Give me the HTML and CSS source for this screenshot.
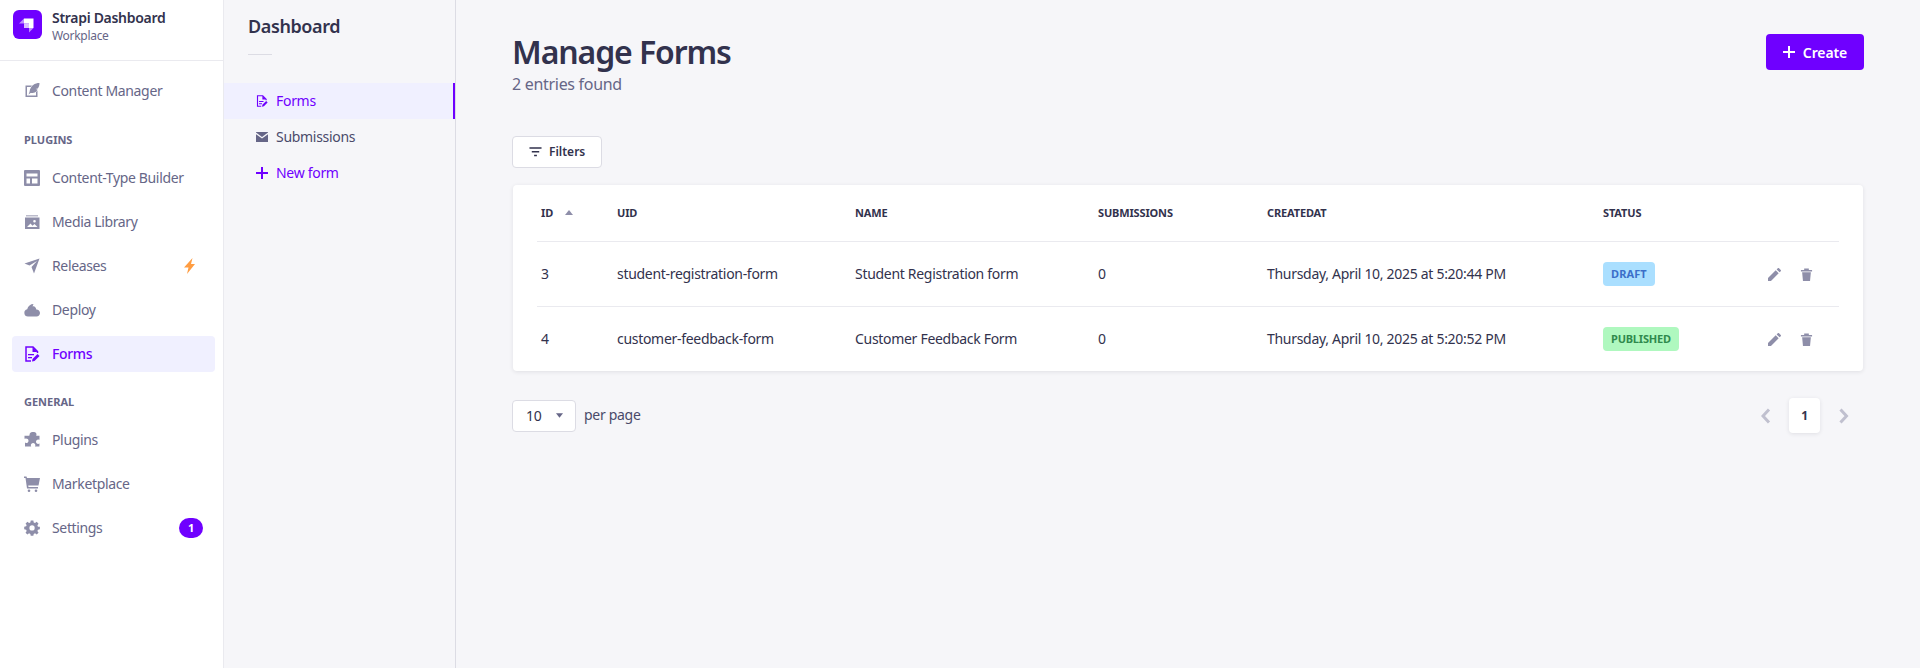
FILE: index.html
```html
<!DOCTYPE html>
<html lang="en">
<head>
<meta charset="utf-8">
<title>Manage Forms</title>
<link rel="stylesheet" href="styles.css">
</head>
<body>
<div class="app">
  <nav class="sidebar">
    <div class="brand">
      <svg class="logo" viewBox="0 0 29 29"><rect width="29" height="29" rx="6" fill="#6f00ff"/><path d="M11 8.500h9.500V18H16v-4.500h-5z" fill="#fff"/><path d="M11 8.500v5H6z" fill="#fff" opacity=".55"/><path d="M16 13.500V18h-5v-4.500z" fill="#fff" opacity=".75"/><path d="M16 18h4.500L16 22.500z" fill="#fff" opacity=".55"/></svg>
      <div class="brand-text">
        <div class="brand-name">Strapi Dashboard</div>
        <div class="brand-sub">Workplace</div>
      </div>
    </div>
    <div class="side-items">
      <a class="side-item"><svg class="ico" viewBox="0 0 16 16"><path d="M2 3.500h6L6.600 5H3v8.500h9V10l1.500-1.500V15H1.500V3.500z"/><path d="M15.500 1C11 1 6.500 3 5.500 10l-1 2.500 2-1.500c3 0 6-.5 7-3.500l-2-.5 2.300-.5C15 5 15.500 3 15.500 1z"/></svg><span>Content Manager</span></a>
      <div class="side-label first">PLUGINS</div>
      <a class="side-item"><svg class="ico" viewBox="0 0 16 16"><path fill-rule="evenodd" d="M0 1A1 1 0 0 1 1 0h14a1 1 0 0 1 1 1v14a1 1 0 0 1-1 1H1a1 1 0 0 1-1-1zM2.500 3.500v3h11v-3zm0 5v5H6v-5zm5.500 0v5h5.500v-5z"/></svg><span>Content-Type Builder</span></a>
      <a class="side-item"><svg class="ico" viewBox="0 0 16 16"><path d="M2 1h12v1.500H2z" opacity=".6"/><path fill-rule="evenodd" d="M1 3.500h14.500V15H1zM10.500 6a1.300 1.300 0 1 0 0 2.600 1.300 1.300 0 0 0 0-2.600zM3 13h10.500l-3-3-2 1.700-2-2.200z"/></svg><span>Media Library</span></a>
      <a class="side-item"><svg class="ico" viewBox="0 0 16 16"><path d="M15.500.5 10 15.500 7.500 9 13 3 5.500 7.500.5 5.500z"/></svg><span>Releases</span><svg class="bolt" viewBox="0 0 12 16"><path d="M9 0 .5 9.500H5L3.500 16l8-10H7.500z" fill="#ff9d42"/></svg></a>
      <a class="side-item"><svg class="ico" viewBox="0 0 16 16"><path d="M4 14.500a3.700 3.700 0 0 1-.8-7.300C4 4 6.500 2 9.500 2l-1 2.500C10 3.500 12 5 12.300 7.500c2.200 0 3.700 1.700 3.700 3.500s-1.500 3.500-3.500 3.500z"/></svg><span>Deploy</span></a>
      <a class="side-item active"><svg class="ico" viewBox="0 0 16 16"><path fill="none" stroke="currentColor" stroke-width="1.500" d="M7 15H2V1h7l4.500 4.500V7"/><path d="M8.500 1v5h5zM4 8h6v1.300H4zM4 11h4v1.300H4zM8 15.500l.5-2.500 5-5 2 2-5 5z"/></svg><span>Forms</span></a>
      <div class="side-label">GENERAL</div>
      <a class="side-item"><svg class="ico" viewBox="0 0 16 16"><path d="M10 0c1.500 0 2.500 1 2.500 2.300L12.200 3.800h3.300v4l-1.300-.4c-1.300 0-2.200 1-2.200 2.300s1 2.200 2.200 2.200l1.300-.3-.1 2.900H11l.4-1.200c0-1.300-1-2.300-2.300-2.300s-2.300 1-2.300 2.300l.4 1.200H1v-4L2 11c1.400.1 2.500-.9 2.500-2.300S3.400 6.400 2 6.400L.5 6.700V3.800h4.800L5.600 2.600C5.600 1 7 0 8.200 0z"/></svg><span>Plugins</span></a>
      <a class="side-item"><svg class="ico" viewBox="0 0 16 16"><path d="M0 .5h2.500L3 2h13l-1.500 7.500H4.200l.3 1.500H14v1.500H3L1.500 2H0z"/><circle cx="5" cy="14.700" r="1.300"/><circle cx="12" cy="14.700" r="1.300"/></svg><span>Marketplace</span></a>
      <a class="side-item"><svg class="ico" viewBox="0 0 16 16"><path fill-rule="evenodd" d="M6.500 0h3l.4 2.200 1.500.6L13.300 1.500l2.100 2.100-1.300 1.900.6 1.500L16.900 7v3l-2.200.4-.6 1.500 1.300 1.900-2.100 2.100-1.900-1.300-1.500.6-.4 2.200h-3l-.4-2.200-1.500-.6-1.900 1.300L.6 13.800l1.300-1.900-.6-1.500L-.9 10V7l2.200-.4.6-1.500L.6 3.600l2.100-2.100 1.900 1.300 1.500-.6zM8 5.500a3 3 0 1 0 0 6 3 3 0 0 0 0-6z" transform="translate(1 .5) scale(.88)"/></svg><span>Settings</span><b class="count">1</b></a>
    </div>
  </nav>

  <aside class="subnav">
    <h2 class="sub-title">Dashboard</h2>
    <div class="sub-rule"></div>
    <div class="sub-items">
      <a class="sub-item current"><svg class="sub-ico" viewBox="0 0 16 16"><path fill="none" stroke="currentColor" stroke-width="1.500" d="M7 15H2V1h7l4.500 4.500V7"/><path d="M8.500 1v5h5zM4 8h6v1.300H4zM4 11h4v1.300H4zM8 15.500l.5-2.500 5-5 2 2-5 5z"/></svg><span>Forms</span></a>
      <a class="sub-item"><svg class="sub-ico" viewBox="0 0 12 12"><path d="M0 1h12v.6L6 6 0 1.600z"/><path d="M0 3.200 6 7.500l6-4.300V11H0z"/></svg><span>Submissions</span></a>
      <a class="sub-item add"><svg class="sub-ico" viewBox="0 0 12 12"><path d="M5 0h2v5h5v2H7v5H5V7H0V5h5z"/></svg><span>New form</span></a>
    </div>
  </aside>

  <main class="content">
    <header class="head">
      <div>
        <h1 class="title">Manage Forms</h1>
        <p class="subtitle">2 entries found</p>
      </div>
      <button class="create"><svg class="create-ico" viewBox="0 0 12 12"><path d="M5 0h2v5h5v2H7v5H5V7H0V5h5z"/></svg>Create</button>
    </header>

    <button class="filters"><svg class="filter-ico" viewBox="0 0 14 12"><path d="M.5 1h13v1.500H.5zM3 5h8v1.500H3zM5.500 9h3v1.500h-3z"/></svg>Filters</button>

    <section class="card">
      <div class="row thead">
        <div class="id-head">ID<svg class="sort" viewBox="0 0 8 5"><path d="M4 0l4 5H0z"/></svg></div>
        <div>UID</div><div>NAME</div><div>SUBMISSIONS</div><div>CREATEDAT</div><div>STATUS</div><div></div>
      </div>
      <div class="row">
        <div>3</div><div>student-registration-form</div><div>Student Registration form</div><div>0</div><div>Thursday, April 10, 2025 at 5:20:44 PM</div>
        <div class="flat"><span class="badge draft">DRAFT</span></div>
        <div class="actions flat"><svg class="act" viewBox="0 0 14 14"><path d="M0 14v-3.200L8.300 2.500l3.200 3.200L3.200 14zM9.300 1.500 10.500.3a1 1 0 0 1 1.400 0l1.800 1.800a1 1 0 0 1 0 1.400l-1.200 1.200z"/></svg><svg class="act" viewBox="0 0 14 14"><path d="M1 2.200h3.500V.5h5v1.700H13v1.500H1zM2.300 4.500h9.400L10.800 14H3.200z"/></svg></div>
      </div>
      <div class="row">
        <div>4</div><div>customer-feedback-form</div><div>Customer Feedback Form</div><div>0</div><div>Thursday, April 10, 2025 at 5:20:52 PM</div>
        <div class="flat"><span class="badge pub">PUBLISHED</span></div>
        <div class="actions flat"><svg class="act" viewBox="0 0 14 14"><path d="M0 14v-3.200L8.300 2.500l3.200 3.200L3.200 14zM9.300 1.500 10.500.3a1 1 0 0 1 1.400 0l1.800 1.800a1 1 0 0 1 0 1.400l-1.200 1.200z"/></svg><svg class="act" viewBox="0 0 14 14"><path d="M1 2.200h3.500V.5h5v1.700H13v1.500H1zM2.300 4.500h9.400L10.800 14H3.200z"/></svg></div>
      </div>
    </section>

    <footer class="foot">
      <div class="per">
        <div class="select"><span>10</span><svg class="caret" viewBox="0 0 8 5"><path d="M0 0h8L4 5z"/></svg></div>
        <span class="per-label">per page</span>
      </div>
      <div class="pager">
        <svg class="chev" viewBox="0 0 10 16"><path d="M8 1.500 2 8l6 6.500" fill="none" stroke="#c0c0cf" stroke-width="3"/></svg>
        <div class="page">1</div>
        <svg class="chev" viewBox="0 0 10 16"><path d="M1.500 1.500 7.500 8l-6 6.500" fill="none" stroke="#c0c0cf" stroke-width="3"/></svg>
      </div>
    </footer>
  </main>
</div>
</body>
</html>
```
FILE: styles.css
```css
* { box-sizing: border-box; }
html, body { margin: 0; height: 100%; }
body { font-family: "Noto Sans", "Open Sans", sans-serif; font-size: 14px; letter-spacing: -.3px; color: #32324d; background: #f6f6f9; overflow: hidden; }
.app { display: flex; height: 668px; }

.sidebar { width: 224px; flex: none; background: #fff; border-right: 1px solid #eaeaef; }
.brand { height: 61px; display: flex; align-items: flex-start; gap: 10px; padding: 10px 0 0 13px; border-bottom: 1px solid #eaeaef; }
.logo { width: 29px; height: 29px; flex: none; }
.brand-text { margin-top: -1px; }
.brand-name { font-size: 14px; line-height: 18px; font-weight: 600; color: #32324d; }
.brand-sub { font-size: 12px; line-height: 18px; color: #666687; }
.side-items { display: flex; flex-direction: column; gap: 8px; padding: 11px 8px 0 12px; }
.side-item { display: flex; align-items: center; height: 36px; padding: 0 12px; border-radius: 4px; color: #666687; }
.side-item span { flex: 1; margin-left: 12px; letter-spacing: -.35px; }
.ico { width: 16px; height: 16px; flex: none; fill: #8e8ea9; }
.side-item.active { background: #f0f0ff; color: #6f00ff; font-weight: 500; }
.side-item.active .ico { fill: #6f00ff; color: #6f00ff; }
.side-label { font-size: 11px; line-height: 16px; font-weight: 700; color: #666687; padding-left: 12px; margin: 14px 0 4px; letter-spacing: 0; }
.side-label.first { margin-top: 15.5px; }
.bolt { width: 13px; height: 16px; margin-right: 7px; }
.count { width: 24px; height: 20px; border-radius: 10px; background: #6f00ff; color: #fff; font-size: 11px; line-height: 20px; text-align: center; }

.subnav { width: 232px; flex: none; background: #f6f6f9; border-right: 1px solid #dcdce4; padding-top: 15px; }
.sub-title { margin: 0 0 0 24px; font-size: 18px; line-height: 22px; font-weight: 600; letter-spacing: -.4px; color: #32324d; }
.sub-rule { width: 24px; height: 1px; background: #dcdce4; margin: 17px 0 28px 24px; }
.sub-items { display: flex; flex-direction: column; }
.sub-item { display: flex; align-items: center; height: 36px; padding-left: 32px; gap: 8px; color: #4a4a6a; }
.sub-item span { padding-bottom: 1px; }
.sub-ico { width: 12px; height: 12px; flex: none; fill: #666687; color: #6f00ff; }
.sub-item.current { background: #f0f0ff; color: #6f00ff; border-right: 2px solid #6f00ff; }
.sub-item.current .sub-ico, .sub-item.add .sub-ico { fill: #6f00ff; }
.sub-item.add { color: #6f00ff; }

.content { flex: 1; padding: 0 56px; min-width: 0; }
.head { display: flex; justify-content: space-between; align-items: flex-start; padding-top: 32px; height: 136px; }
.title { margin: 0; font-size: 32px; line-height: 40px; font-weight: 600; letter-spacing: -1.1px; color: #32324d; }
.subtitle { margin: 0; font-size: 16px; line-height: 24px; letter-spacing: -.3px; color: #666687; }
.create { margin-top: 2px; width: 98px; height: 36px; display: flex; align-items: center; justify-content: center; gap: 8px; border: 0; border-radius: 4px; background: #6f00ff; color: #fff; font: 600 14px "Noto Sans", sans-serif; letter-spacing: -.1px; }
.create-ico { width: 12px; height: 12px; fill: #fff; }

.filters { display: flex; align-items: center; gap: 7px; width: 90px; height: 32px; padding: 0 0 1px 16px; background: #fff; border: 1px solid #dcdce4; border-radius: 4px; font: 600 12px "Noto Sans", sans-serif; color: #32324d; }
.filter-ico { width: 13px; height: 12px; fill: #32324d; }

.card { margin: 17px 0 0 1px; width: 1350px; background: #fff; border-radius: 4px; box-shadow: 0 1px 4px rgba(33, 33, 52, .1); padding: 0 24px; }
.row { display: grid; grid-template-columns: 76px 238px 243px 169px 336px 1fr 100px; align-items: center; height: 65px; padding-left: 4px; border-top: 1px solid #eaeaef; color: #32324d; }
.row > div { padding-bottom: 2px; }
.row > .flat { padding-bottom: 0; }
.thead { height: 56px; border-top: 0; font-size: 11px; font-weight: 700; letter-spacing: -.15px; }
.id-head { display: flex; align-items: center; gap: 12px; }
.sort { width: 8px; height: 5px; fill: #8e8ea9; }
.badge { display: inline-block; height: 24px; padding: 0 8px; border-radius: 4px; font-size: 11px; line-height: 23px; font-weight: 700; letter-spacing: -.1px; vertical-align: top; }
.draft { background: #aadfff; color: #3b6fc9; letter-spacing: .1px; }
.pub { background: #aff8bf; color: #2f8a4d; letter-spacing: -.2px; }
.actions { display: flex; gap: 19px; padding-left: 29px; }
.act { width: 13px; height: 13px; fill: #8e8ea9; }

.foot { display: flex; justify-content: space-between; align-items: center; margin-top: 27px; width: 1352px; }
.per { display: flex; align-items: center; gap: 8px; }
.select { width: 64px; height: 32px; display: flex; align-items: center; justify-content: space-between; padding: 0 12px 1px 13px; background: #fff; border: 1px solid #dcdce4; border-radius: 4px; color: #32324d; }
.caret { width: 7px; height: 5px; fill: #666687; }
.per-label { color: #4a4a6a; padding-bottom: 2px; }
.pager { display: flex; align-items: center; gap: 18px; padding-right: 15px; }
.chev { width: 10px; height: 16px; }
.page { width: 31px; height: 35px; margin-right: 1px; background: #fff; border-radius: 4px; box-shadow: 0 1px 4px rgba(33, 33, 52, .1); text-align: center; font-size: 12px; line-height: 35px; font-weight: 700; }
```
